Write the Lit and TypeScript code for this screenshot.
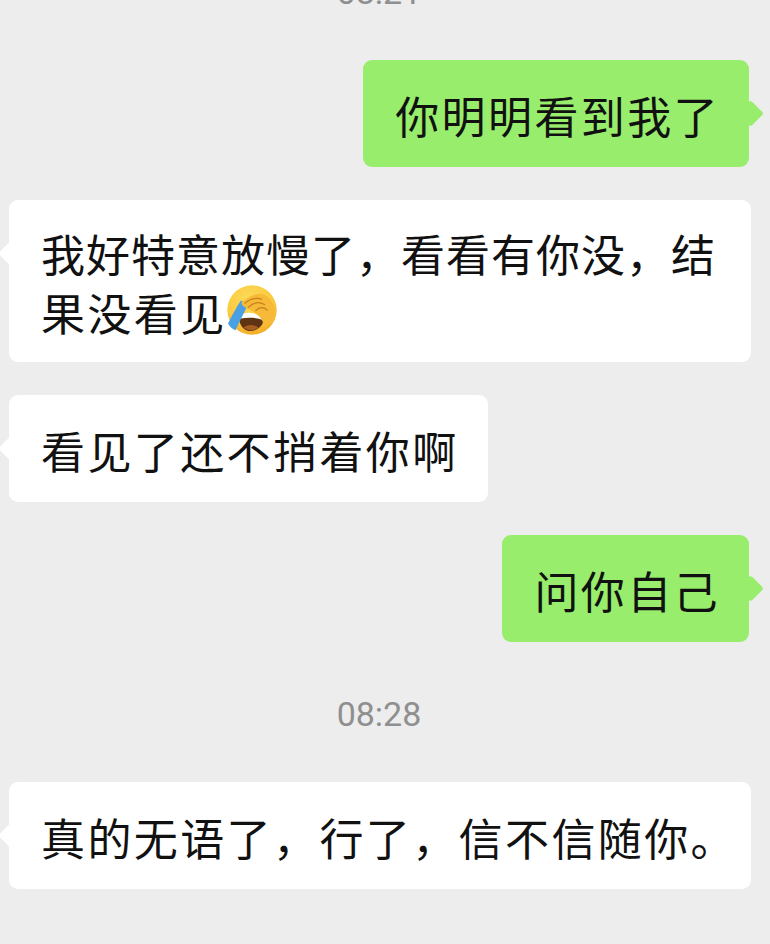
import { LitElement, html, css } from "lit";
import { customElement } from "lit/decorators.js";

@customElement("app-root")
export class AppRoot extends LitElement {
  static styles = css`
    :host { display: block; width: 770px; height: 944px; overflow: hidden; background: #ededed; font-family: "Noto Sans CJK SC", "Noto Sans", sans-serif; }
    .chat { display: flex; flex-direction: column; margin-top: -28px; padding: 0 19px 0 9px; }
    .time { height: 40px; line-height: 40px; text-align: center; font-family: Roboto, "Liberation Sans", sans-serif; font-size: 34px; color: #8f8f8f; margin: 0 2px 48px 0; }
    .time.mid { margin-top: 52px; margin-bottom: 48px; }
    .row { display: flex; margin-bottom: 33px; }
    .row.last { margin-bottom: 0; }
    .row.me { justify-content: flex-end; padding-right: 2px; }
    .bubble { position: relative; box-sizing: border-box; min-height: 107px; display: flex; flex-direction: column; justify-content: center; padding: 21px 29px 21px 32px; max-width: 742px; font-size: 44px; letter-spacing: 2.4px; line-height: 60px; color: #111; border-radius: 9px; white-space: nowrap; background: #fff; }
    .line { display: block; height: 60px; position: relative; top: 1px; }
    .line.tight { top: 2px; letter-spacing: 1px; }
    .bubble.green { background: #98ed6c; }
    .bubble.wide { width: 742px; }
    .tail { position: absolute; top: 44px; left: -7px; width: 19px; height: 19px; transform: rotate(45deg); border-radius: 3px; background: #fff; }
    .green .tail { left: auto; right: -11px; background: #98ed6c; }
    .emoji { display: inline-block; width: 50px; height: 50px; vertical-align: -4px; letter-spacing: 0; }
  `;

  private emoji() {
    return html`<svg class="emoji" viewBox="20 10 146 148" aria-hidden="true">
      <defs>
        <radialGradient id="face" cx="45%" cy="30%" r="75%">
          <stop offset="0" stop-color="#fcdc5c"></stop>
          <stop offset="0.65" stop-color="#fbc93c"></stop>
          <stop offset="1" stop-color="#f2a522"></stop>
        </radialGradient>
      </defs>
      <circle cx="93" cy="84" r="73" fill="url(#face)"></circle>
      <path d="M54 104 C75 90 110 94 127 116 C123 136 102 149 82 146 C66 143 55 126 54 104 Z" fill="#5f3413"></path>
      <path d="M68 136 C78 126 100 126 112 136 C102 146 84 148 68 136 Z" fill="#a85c22"></path>
      <path d="M56 100 C78 86 110 90 127 114 C105 106 82 105 56 110 Z" fill="#fff"></path>
      <path d="M60 56 L82 68 C68 94 56 120 44 144 C34 140 26 132 22 124 C34 100 46 78 60 56 Z" fill="#4b9fe3"></path>
      <path d="M62 62 C78 48 98 34 120 36 C148 42 166 70 158 112 C150 130 136 130 126 122 C120 102 100 88 80 80 C70 76 62 70 62 62 Z" fill="#f7b938"></path>
      <path d="M72 64 C86 52 104 46 122 52 M82 76 C94 64 112 58 130 68 M104 86 C114 76 126 74 138 84" fill="none" stroke="#c67f1c" stroke-width="3.5" stroke-linecap="round"></path>
    </svg>`;
  }

  render() {
    return html`<div class="chat">
      <div class="time">08:21</div>
      <div class="row me">
        <div class="bubble green"><div class="tail"></div><span class="line">你明明看到我了</span></div>
      </div>
      <div class="row">
        <div class="bubble wide">
          <div class="tail"></div>
          <span class="line tight">我好特意放慢了，看看有你没，结</span>
          <span class="line">果没看见${this.emoji()}</span>
        </div>
      </div>
      <div class="row">
        <div class="bubble"><div class="tail"></div><span class="line">看见了还不捎着你啊</span></div>
      </div>
      <div class="row me last">
        <div class="bubble green"><div class="tail"></div><span class="line">问你自己</span></div>
      </div>
      <div class="time mid">08:28</div>
      <div class="row last">
        <div class="bubble wide"><div class="tail"></div><span class="line">真的无语了，行了，信不信随你。</span></div>
      </div>
    </div>`;
  }
}
